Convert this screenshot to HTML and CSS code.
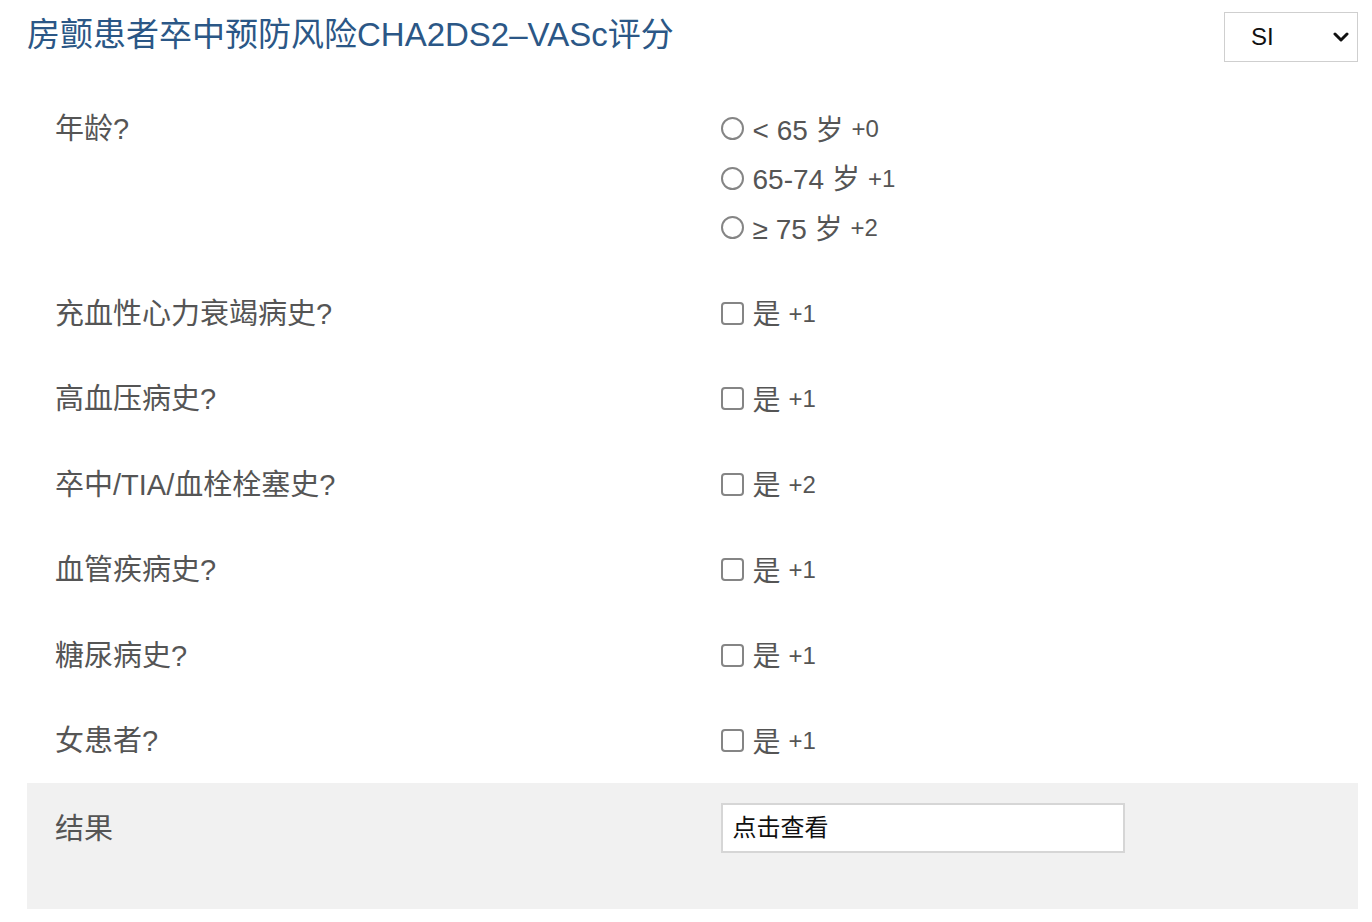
FILE: index.html
```html
<!DOCTYPE html>
<html lang="zh-CN">
<head>
<meta charset="utf-8">
<title>CHA2DS2-VASc</title>
<link rel="stylesheet" href="styles.css">
</head>
<body>
<div class="page">
  <header class="header">
    <h1 class="title">房颤患者卒中预防风险CHA2DS2–VASc评分</h1>
    <div class="unit-select">
      <span class="unit-text">SI</span>
      <svg class="chev" width="16" height="12" viewBox="0 0 16 12"><path d="M2 3 L8 9 L14 3" fill="none" stroke="#111" stroke-width="3" stroke-linecap="round" stroke-linejoin="round"/></svg>
    </div>
  </header>

  <div class="row">
    <div class="label">年龄?</div>
    <div class="opts">
      <label class="opt"><input type="radio" name="age" class="radio"><span>&lt; 65 岁</span><span class="pts">+0</span></label>
      <label class="opt"><input type="radio" name="age" class="radio"><span>65-74 岁</span><span class="pts">+1</span></label>
      <label class="opt"><input type="radio" name="age" class="radio"><span>≥ 75 岁</span><span class="pts">+2</span></label>
    </div>
  </div>

  <div class="row">
    <div class="label">充血性心力衰竭病史?</div>
    <div class="opts"><label class="opt"><input type="checkbox" class="check"><span>是</span><span class="pts">+1</span></label></div>
  </div>
  <div class="row">
    <div class="label">高血压病史?</div>
    <div class="opts"><label class="opt"><input type="checkbox" class="check"><span>是</span><span class="pts">+1</span></label></div>
  </div>
  <div class="row">
    <div class="label">卒中/TIA/血栓栓塞史?</div>
    <div class="opts"><label class="opt"><input type="checkbox" class="check"><span>是</span><span class="pts">+2</span></label></div>
  </div>
  <div class="row">
    <div class="label">血管疾病史?</div>
    <div class="opts"><label class="opt"><input type="checkbox" class="check"><span>是</span><span class="pts">+1</span></label></div>
  </div>
  <div class="row">
    <div class="label">糖尿病史?</div>
    <div class="opts"><label class="opt"><input type="checkbox" class="check"><span>是</span><span class="pts">+1</span></label></div>
  </div>
  <div class="row">
    <div class="label">女患者?</div>
    <div class="opts"><label class="opt"><input type="checkbox" class="check"><span>是</span><span class="pts">+1</span></label></div>
  </div>

  <div class="row result">
    <div class="label">结果</div>
    <div class="opts"><div class="result-box">点击查看</div></div>
  </div>
</div>
</body>
</html>
```

FILE: styles.css
```css
html, body {
  margin: 0;
  padding: 0;
  background: #fff;
}
body {
  font-family: "Liberation Sans", "Noto Sans CJK SC", sans-serif;
  color: #555;
}
.page {
  padding: 0 14px 0 27px;
}
.header {
  display: flex;
  justify-content: space-between;
  align-items: flex-start;
  padding-top: 12px;
  height: 73px;
}
.title {
  margin: 0;
  font-size: 33px;
  font-weight: normal;
  line-height: 46px;
  color: #2b5786;
}
.unit-select {
  box-sizing: border-box;
  width: 134px;
  height: 50px;
  border: 1px solid #cfcfcf;
  display: flex;
  align-items: center;
  justify-content: space-between;
  padding: 0 8px 0 26px;
  background: #fff;
}
.unit-text {
  font-size: 24px;
  color: #111;
}
.row {
  display: flex;
  padding: 18px 0;
}
.label, .opts {
  box-sizing: border-box;
  width: 50%;
  padding-left: 28px;
}
.label {
  font-size: 29px;
  line-height: 49.5px;
  height: 49.5px;
  padding-top: 2px;
  color: #555;
}
.opts {
  display: flex;
  flex-direction: column;
}
.opt {
  display: flex;
  align-items: center;
  height: 49.5px;
  font-size: 28px;
  color: #555;
}
.pts {
  font-size: 24px;
  margin-left: 8px;
  margin-top: 3px;
}
.radio, .check {
  -webkit-appearance: none;
  appearance: none;
  box-sizing: border-box;
  width: 23px;
  height: 23px;
  margin: 2px 9px 0 0;
  border: 2px solid #858585;
  background: #fff;
}
.radio {
  border-radius: 50%;
}
.check {
  border-radius: 4px;
}
.result {
  background: #f1f1f1;
  padding: 20px 0 56px;
}
.result-box {
  box-sizing: border-box;
  width: 404px;
  height: 50px;
  border: 2px solid #d6d6d6;
  background: #fff;
  font-size: 24px;
  color: #111;
  line-height: 46px;
  padding-left: 10px;
}
```
